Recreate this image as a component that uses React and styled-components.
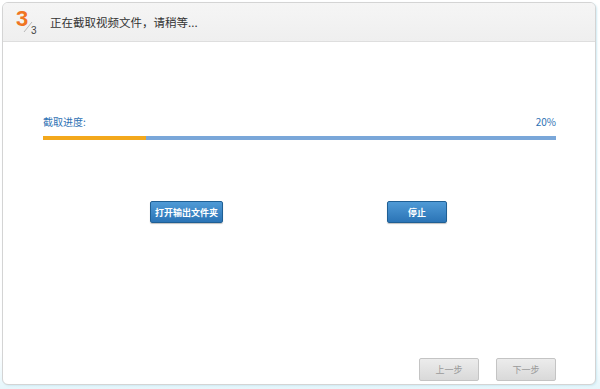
import React from "react";
import styled, { createGlobalStyle } from "styled-components";

const GlobalStyle = createGlobalStyle`
  html, body {
    margin: 0;
    padding: 0;
    background: #ffffff;
    font-family: "Noto Sans CJK SC", "Liberation Sans", sans-serif;
  }
`;

const Page = styled.div`
  width: 600px;
  height: 389px;
  padding: 2px 4px 4px 2px;
  box-sizing: border-box;
  background: linear-gradient(to bottom, #ffffff 90%, #e6f6fb 100%);
`;

const Panel = styled.div`
  height: 100%;
  border: 1px solid #d4d4d4;
  border-radius: 6px;
  box-shadow: 1px 1px 2px #cfeaf3;
  background: #ffffff;
  display: flex;
  flex-direction: column;
  overflow: hidden;
  box-sizing: border-box;
`;

const Header = styled.div`
  height: 38px;
  flex: none;
  display: flex;
  align-items: center;
  background: linear-gradient(to bottom, #f5f5f5, #efefef);
  border-bottom: 1px solid #dedede;
  padding-left: 12px;
`;

const Step = styled.div`
  position: relative;
  width: 24px;
  height: 34px;
  margin-right: 11px;
`;

const StepNum = styled.span`
  position: absolute;
  left: 1px;
  top: 1px;
  font-family: "Liberation Sans", sans-serif;
  font-weight: bold;
  font-size: 22px;
  color: #f07522;
`;

const StepTotal = styled.span`
  position: absolute;
  left: 16px;
  top: 20px;
  font-family: "Liberation Sans", sans-serif;
  font-size: 10px;
  color: #444;
`;

const Slash = styled.svg`
  position: absolute;
  left: 8px;
  top: 16px;
`;

const Title = styled.div`
  font-size: 11.5px;
  color: #333;
`;

const Body = styled.div`
  flex: 1;
  display: flex;
  flex-direction: column;
  padding: 72px 39px 0 40px;
`;

const ProgressLabels = styled.div`
  display: flex;
  justify-content: space-between;
  font-size: 10px;
  color: #2f72b4;
  height: 16px;
  line-height: 16px;
`;

const Track = styled.div`
  margin-top: 6px;
  height: 4px;
  background: #7aa7d9;
  display: flex;
`;

const Fill = styled.div`
  height: 100%;
  background: #f3a81c;
`;

const ActionRow = styled.div`
  display: flex;
  margin-top: 61px;
  padding-left: 107px;
  gap: 164px;
`;

const BlueButton = styled.button`
  width: ${(p) => p.$w}px;
  height: 22px;
  border: 1px solid #1f5f94;
  border-radius: 2px;
  background: linear-gradient(to bottom, #4f9ad6, #2b74b6);
  color: #ffffff;
  font-family: inherit;
  font-weight: bold;
  font-size: 9px;
  padding: 0;
  box-shadow: 0 1px 1px rgba(0, 0, 0, 0.25);
`;

const Footer = styled.div`
  margin-top: auto;
  display: flex;
  justify-content: flex-end;
  gap: 17px;
  padding: 0 39px 3px 0;
`;

const GrayButton = styled.button`
  width: 60px;
  height: 23px;
  border: 1px solid #c4c4c4;
  border-radius: 2px;
  background: linear-gradient(to bottom, #ececec, #d9d9d9);
  color: #9a9a9a;
  font-family: inherit;
  font-size: 9px;
  padding: 0;
`;

export default function App() {
  const progress = 20;
  return (
    <>
      <GlobalStyle />
      <Page>
        <Panel>
          <Header>
            <Step>
              <StepNum>3</StepNum>
              <Slash width="10" height="12" viewBox="0 0 10 12">
                <line x1="9" y1="1" x2="1" y2="11" stroke="#b8b8b8" strokeWidth="1" />
              </Slash>
              <StepTotal>3</StepTotal>
            </Step>
            <Title>正在截取视频文件，请稍等...</Title>
          </Header>
          <Body>
            <ProgressLabels>
              <span>截取进度:</span>
              <span>{progress}%</span>
            </ProgressLabels>
            <Track>
              <Fill style={{ width: `${progress}%` }} />
            </Track>
            <ActionRow>
              <BlueButton $w={73}>打开输出文件夹</BlueButton>
              <BlueButton $w={60}>停止</BlueButton>
            </ActionRow>
          </Body>
          <Footer>
            <GrayButton>上一步</GrayButton>
            <GrayButton>下一步</GrayButton>
          </Footer>
        </Panel>
      </Page>
    </>
  );
}
